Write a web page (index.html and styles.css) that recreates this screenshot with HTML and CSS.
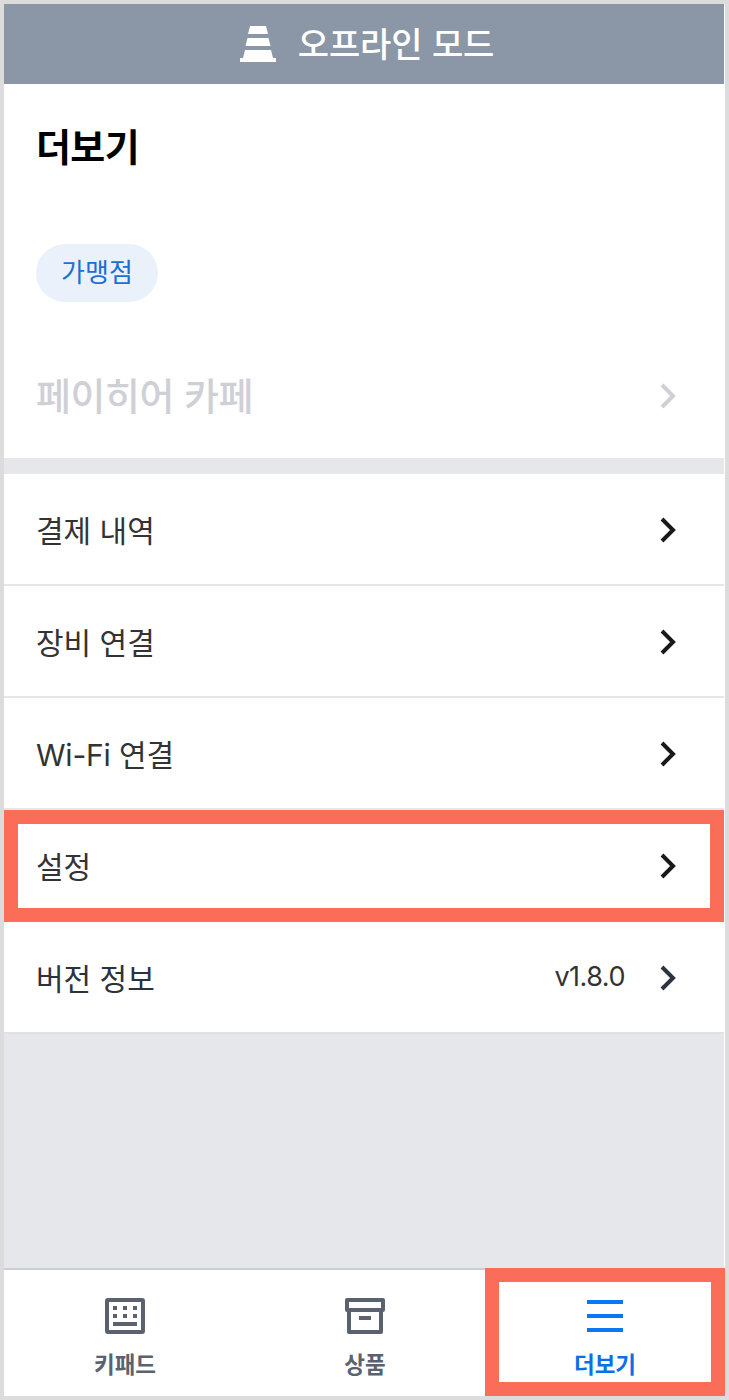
FILE: index.html
```
<!DOCTYPE html>
<html lang="ko">
<head>
    <meta charset="UTF-8">
    <title>더보기</title>
    <link rel="stylesheet" href="styles.css">
</head>
<body>
    <div class="screen">
        <header class="offline">
            <svg class="cone" width="36" height="36" viewBox="0 0 36 36" fill="#fff">
                <path d="M10 0h16l2 8H8zM7.500 12h21l2 8H5.500zM5 24h26l2 8h3v4H0v-4h3z"/>
            </svg>
            <span class="offline-text">오프라인 모드</span>
        </header>

        <section class="store">
            <h1>더보기</h1>
            <span class="badge">가맹점</span>
            <div class="store-row">
                <span class="store-name">페이히어 카페</span>
                <svg class="arrow" width="16" height="26" viewBox="0 0 16 26"><path d="M2 2l11 11L2 24"/></svg>
            </div>
        </section>

        <main class="menu">
            <a class="item">
                <span>결제 내역</span>
                <svg class="arrow" width="16" height="26" viewBox="0 0 16 26"><path d="M2 2l11 11L2 24"/></svg>
            </a>
            <a class="item">
                <span>장비 연결</span>
                <svg class="arrow" width="16" height="26" viewBox="0 0 16 26"><path d="M2 2l11 11L2 24"/></svg>
            </a>
            <a class="item">
                <span><span class="latin">Wi-Fi</span> 연결</span>
                <svg class="arrow" width="16" height="26" viewBox="0 0 16 26"><path d="M2 2l11 11L2 24"/></svg>
            </a>
            <a class="item marked">
                <span>설정</span>
                <svg class="arrow" width="16" height="26" viewBox="0 0 16 26"><path d="M2 2l11 11L2 24"/></svg>
            </a>
            <a class="item version">
                <span>버전 정보</span>
                <span class="number">v1.8.0</span>
                <svg class="arrow" width="16" height="26" viewBox="0 0 16 26"><path d="M2 2l11 11L2 24"/></svg>
            </a>
        </main>

        <nav class="tabs">
            <a class="tab">
                <svg width="40" height="36" viewBox="0 0 40 36">
                    <rect x="2" y="2" width="36" height="32" rx="1" fill="none" stroke="#5a6270" stroke-width="4"/>
                    <path fill="#5a6270" d="M8 8h4v4H8zM18 8h4v4h-4zM28 8h4v4h-4zM8 16h4v4H8zM18 16h4v4h-4zM28 16h4v4h-4zM8 24h24v4H8z"/>
                </svg>
                <span>키패드</span>
            </a>
            <a class="tab">
                <svg width="40" height="36" viewBox="0 0 40 36" fill="none" stroke="#5a6270" stroke-width="4" stroke-linejoin="round">
                    <path d="M2 2h36v10H2zM4 12v22h32V12M14 20h12"/>
                </svg>
                <span>상품</span>
            </a>
            <a class="tab active">
                <svg width="36" height="36" viewBox="0 0 36 36" fill="#0a78f5">
                    <path d="M0 2h36v4H0zM0 16h36v4H0zM0 30h36v4H0z"/>
                </svg>
                <span>더보기</span>
            </a>
        </nav>
    </div>
</body>
</html>
```

FILE: styles.css
```
* {
    box-sizing: border-box;
}
body {
    margin: 0;
    font-family: "Noto Sans CJK KR", sans-serif;
    background-color: #fff;
}
.screen {
    width: 729px;
    height: 1400px;
    border: 4px solid #dcdcdc;
    padding-right: 1px;
    display: flex;
    flex-direction: column;
    background: #fff;
}
.offline {
    height: 80px;
    background-color: #8b96a6;
    color: #fff;
    display: flex;
    justify-content: center;
    align-items: center;
    gap: 22px;
    padding-left: 6px;
}
.offline-text {
    font-size: 34px;
    font-weight: 500;
    line-height: 50px;
    letter-spacing: -0.1px;
    margin-bottom: 2px;
}
.store {
    height: 374px;
    padding: 33px 48px 0 32px;
}
h1 {
    margin: 0 0 71px;
    font-size: 38px;
    font-weight: 700;
    line-height: 56px;
    color: #000;
    letter-spacing: -0.6px;
}
.badge {
    display: block;
    width: 122px;
    height: 58px;
    border-radius: 29px;
    background-color: #eaf1fb;
    color: #1a6fd2;
    font-size: 26px;
    line-height: 54px;
    text-align: center;
}
.store-row {
    margin-top: 66px;
    display: flex;
    justify-content: space-between;
    align-items: center;
    height: 56px;
    color: #cfd0d6;
}
.store-name {
    font-size: 38px;
    font-weight: 500;
    letter-spacing: -0.5px;
    margin-bottom: 6px;
}
.arrow {
    fill: none;
    stroke: currentColor;
    stroke-width: 4;
}
.menu {
    flex: 1;
    border-top: 16px solid #e5e7eb;
    background-color: #e5e7eb;
}
.item {
    height: 112px;
    padding: 0 48px 0 32px;
    border-bottom: 2px solid #e5e6e8;
    background-color: #fff;
    color: #333;
    font-size: 30px;
    display: flex;
    justify-content: space-between;
    align-items: center;
}
.item .arrow {
    color: #18191d;
    margin-top: 2px;
}
.item.marked {
    border: 14px solid #fa6d59;
    padding: 0 34px 2px 18px;
}
.item.version {
    color: #2c323c;
    border-bottom-color: #dfe1e4;
}
.item.version .arrow {
    color: #2b333e;
}
.latin {
    font-family: "Inter", sans-serif;
    letter-spacing: -0.2px;
}
.number {
    font-family: "Inter", sans-serif;
    font-size: 27px;
    letter-spacing: -0.5px;
    color: #333;
    margin-left: auto;
    margin-right: 35px;
    margin-bottom: 2px;
}
.tabs {
    height: 128px;
    display: flex;
    padding-left: 1px;
    background-color: #fff;
    border-top: 2px solid #cbced3;
}
.tab {
    flex: 0 0 240px;
    display: flex;
    flex-direction: column;
    align-items: center;
    padding-top: 28px;
    color: #5a6270;
    font-size: 22.5px;
    font-weight: 700;
}
.tab span {
    margin-top: 12px;
    line-height: 34px;
}
/* the frame covers the bar's top line */
.tab.active {
    margin-top: -2px;
    padding-top: 16px;
    border: 14px solid #fa6d59;
    color: #0a6fe8;
}
```
